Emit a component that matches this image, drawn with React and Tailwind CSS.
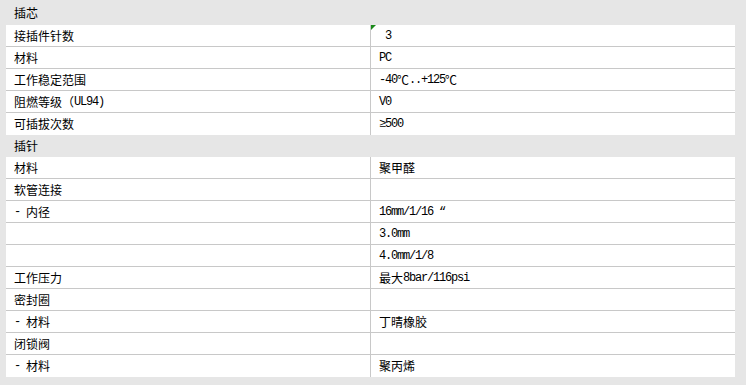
import React from "react";

const sections = [
  {
    title: "插芯",
    first: true,
    rows: [
      ["接插件针数", " 3", true],
      ["材料", "PC"],
      ["工作稳定范围", "-40℃..+125℃"],
      ["阻燃等级（UL94)", "V0"],
      ["可插拔次数", "≥500"],
    ],
  },
  {
    title: "插针",
    rows: [
      ["材料", "聚甲醛"],
      ["软管连接", ""],
      ["- 内径", "16mm/1/16 “"],
      ["", "3.0mm"],
      ["", "4.0mm/1/8"],
      ["工作压力", "最大8bar/116psi"],
      ["密封圈", ""],
      ["- 材料", "丁晴橡胶"],
      ["闭锁阀", ""],
      ["- 材料", "聚丙烯"],
    ],
  },
];

const cjk = /[\u3000-\u9fff\uff00-\uffef℃]/;

// latin runs get the narrow mono face, han runs the cjk face
const Text = ({ value }) => {
  const parts = value.match(/[\u3000-\u9fff\uff00-\uffef℃]+|[^\u3000-\u9fff\uff00-\uffef℃]+/g) || [];
  return parts.map((p, i) =>
    cjk.test(p) ? (
      <span key={i} className="text-[12px]" style={{ fontFamily: '"Noto Sans CJK SC", sans-serif' }}>
        {p}
      </span>
    ) : (
      <span
        key={i}
        className="text-[12px] tracking-[-1.2px] whitespace-pre"
        style={{ fontFamily: '"Liberation Mono", monospace' }}
      >
        {p}
      </span>
    )
  );
};

const App = () => {
  return (
    <div className="w-[746px] h-[385px] bg-[#e6e6e6] text-black overflow-hidden">
      <div className="w-[729px] ml-[6px]">
        {sections.map((s) => (
          <div key={s.title}>
            <div
              className={`${s.first ? "h-[25px] pt-[1px]" : "h-[22px]"} flex items-center pl-[8px] bg-[#e6e6e6]`}
            >
              <Text value={s.title} />
            </div>
            {s.rows.map((r, i) => (
              <div
                key={i}
                className={`flex h-[22px] bg-white ${
                  i < s.rows.length - 1 ? "border-b border-[#c8c8c8]" : ""
                }`}
              >
                <div className="w-[365px] border-r border-[#c8c8c8] flex items-center pl-[8px] leading-none">
                  <Text value={r[0]} />
                </div>
                <div className="relative flex-1 flex items-center pl-[8px] leading-none">
                  {r[2] && (
                    <span className="absolute left-0 top-0 w-0 h-0 border-t-[5px] border-r-[5px] border-t-[#1a8a1a] border-r-transparent" />
                  )}
                  <Text value={r[1]} />
                </div>
              </div>
            ))}
          </div>
        ))}
      </div>
    </div>
  );
};

export default App;
